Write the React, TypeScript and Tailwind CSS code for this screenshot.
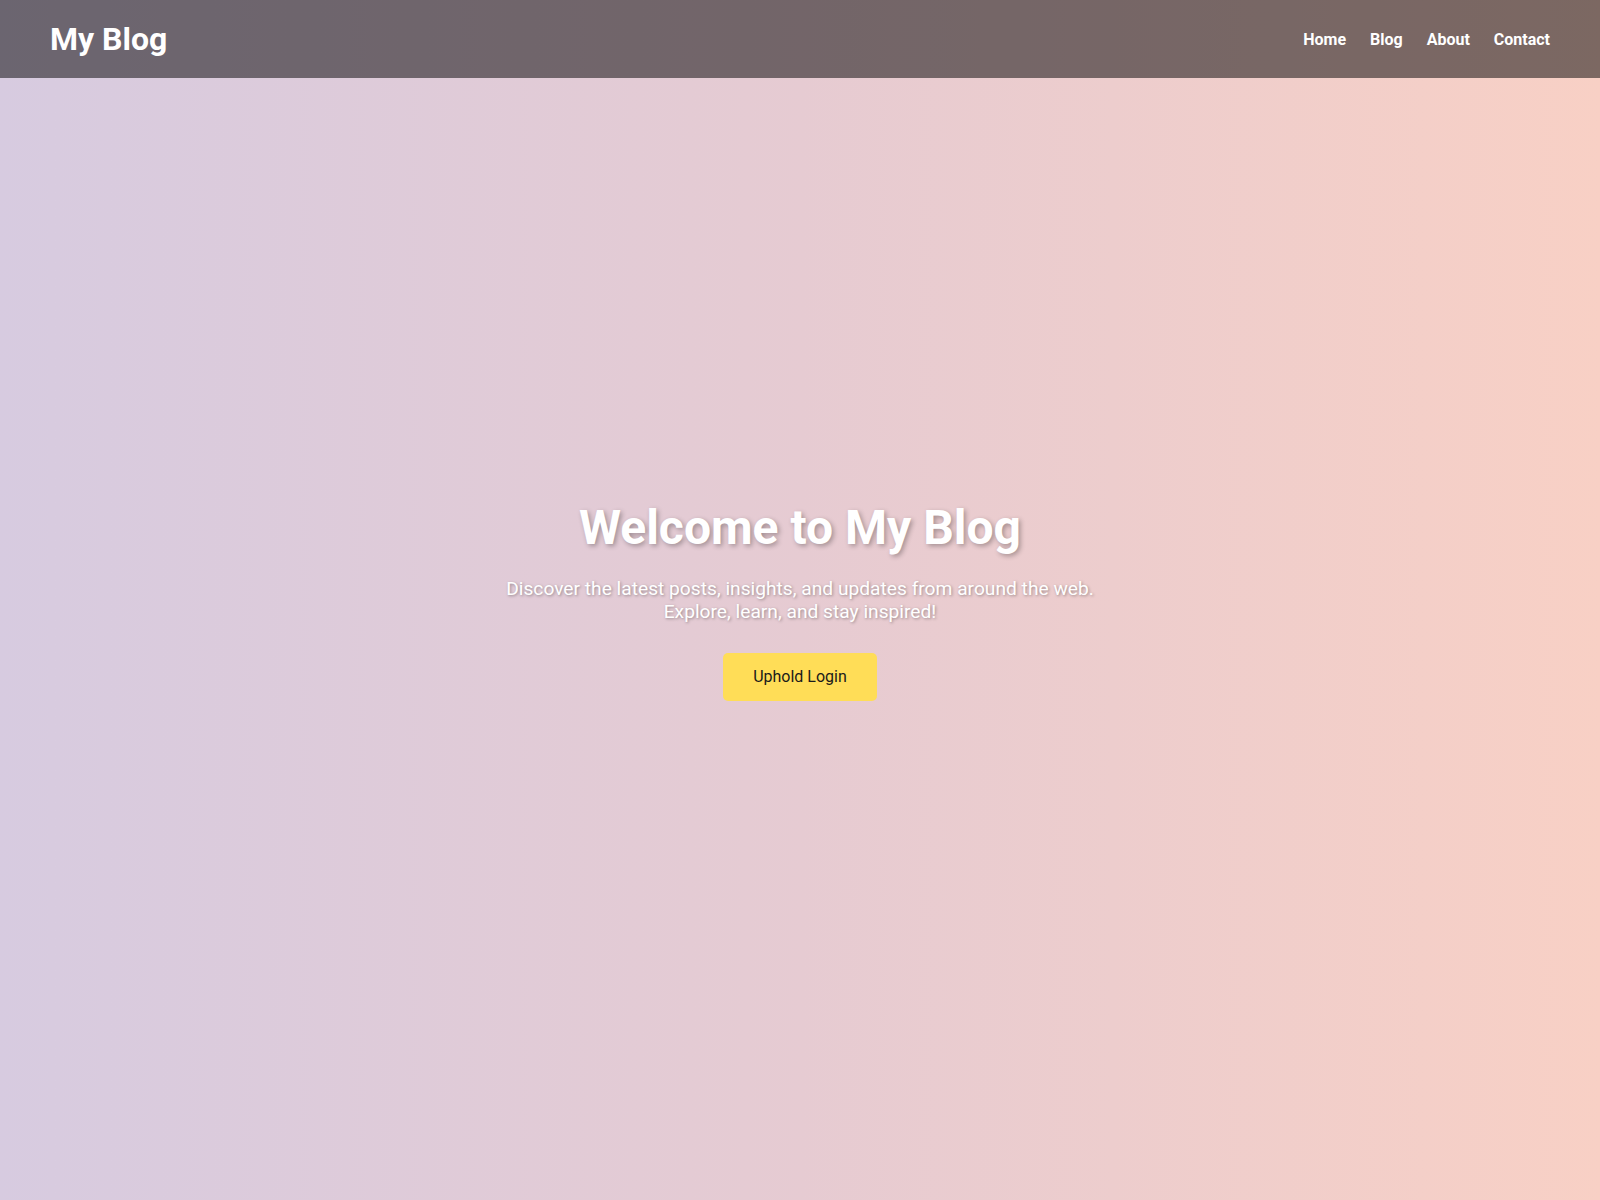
export default function App() {
  const links = ['Home', 'Blog', 'About', 'Contact']

  return (
    <div
      className="relative min-h-screen bg-gradient-to-r from-[#d7cbe0] via-[#e6cbd2] to-[#f8d0c5] font-['Roboto',sans-serif]"
    >
      {/* Header */}
      <header className="absolute inset-x-0 top-0 h-[78px] px-[50px] flex items-center justify-between bg-black/50">
        <h1 className="text-[32px] font-bold text-white leading-none">My Blog</h1>
        <nav className="flex items-center gap-6 pt-[2px]">
          {links.map((l) => (
            <a key={l} href="#" className="text-white font-bold text-base">
              {l}
            </a>
          ))}
        </nav>
      </header>

      {/* Hero */}
      <main className="min-h-screen flex flex-col items-center justify-center text-center px-6">
        <h2 className="text-[48px] font-bold leading-[1.2] text-white [text-shadow:2px_2px_5px_rgba(0,0,0,0.3)]">
          Welcome to My Blog
        </h2>
        <p className="mt-5 max-w-[600px] text-[19.2px] leading-[23px] text-white [text-shadow:1px_1px_3px_rgba(0,0,0,0.35)]">
          Discover the latest posts, insights, and updates from around the web. Explore, learn, and stay inspired!
        </p>
        <button className="mt-[30px] px-[30px] py-3 rounded-[5px] bg-[#ffdd57] text-[#1a1a1a] text-base leading-6">
          Uphold Login
        </button>
      </main>
    </div>
  )
}
